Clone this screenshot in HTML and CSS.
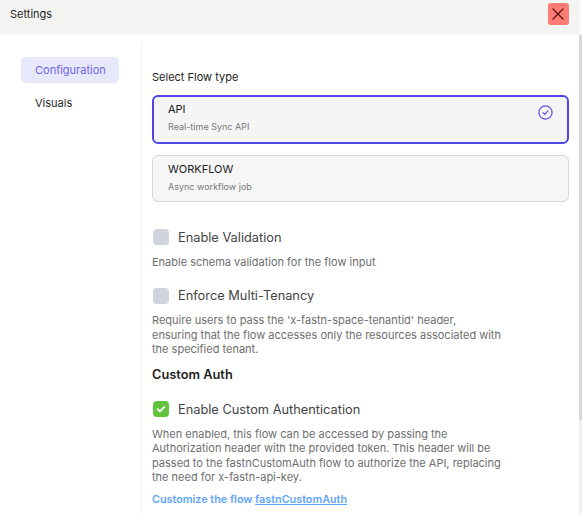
FILE: index.html
```html
<!DOCTYPE html>
<html lang="en">
<head>
<meta charset="utf-8">
<title>Settings</title>
<link rel="stylesheet" href="styles.css">
</head>
<body>
<div class="page">
  <div class="header">
    <div class="title">Settings</div>
    <button class="close" aria-label="Close">
      <svg width="12" height="12" viewBox="0 0 12 12"><path d="M1 1L11 11M11 1L1 11" stroke="#5a1414" stroke-width="1.3" fill="none" stroke-linecap="round"/></svg>
    </button>
  </div>
  <div class="main">
    <div class="sidebar">
      <div class="nav-item active">Configuration</div>
      <div class="nav-item">Visuals</div>
    </div>
    <div class="content">
      <div class="section-label">Select Flow type</div>
      <div class="card selected">
        <div class="card-text">
          <div class="card-title">API</div>
          <div class="card-sub">Real-time Sync API</div>
        </div>
        <svg class="card-check" width="15" height="15" viewBox="0 0 15 15"><circle cx="7.5" cy="7.5" r="6.6" fill="none" stroke="#5b50e6" stroke-width="1.2"/><path d="M5.1 7.8L6.8 9.4L10 5.9" fill="none" stroke="#5b50e6" stroke-width="1.2" stroke-linecap="round" stroke-linejoin="round"/></svg>
      </div>
      <div class="card">
        <div class="card-text">
          <div class="card-title">WORKFLOW</div>
          <div class="card-sub">Async workflow job</div>
        </div>
      </div>

      <div class="check-row first">
        <span class="box"></span>
        <span class="check-label">Enable Validation</span>
      </div>
      <div class="desc">Enable schema validation for the flow input</div>

      <div class="check-row">
        <span class="box"></span>
        <span class="check-label">Enforce Multi-Tenancy</span>
      </div>
      <div class="desc">Require users to pass the 'x-fastn-space-tenantid' header, ensuring that the flow accesses only the resources associated with the specified tenant.</div>

      <div class="heading">Custom Auth</div>

      <div class="check-row after-heading">
        <span class="box checked"><svg width="12" height="12" viewBox="0 0 12 12"><path d="M2.6 6.2L4.9 8.4L9.4 3.8" fill="none" stroke="#fff" stroke-width="1.8" stroke-linecap="round" stroke-linejoin="round"/></svg></span>
        <span class="check-label">Enable Custom Authentication</span>
      </div>
      <div class="desc">When enabled, this flow can be accessed by passing the Authorization header with the provided token. This header will be passed to the fastnCustomAuth flow to authorize the API, replacing the need for x-fastn-api-key.</div>
      <div class="link-line">Customize the flow <a class="link" href="#">fastnCustomAuth</a></div>
    </div>
  </div>
</div>
<div class="scrollbar">
  <div class="sb-top"></div>
  <div class="sb-thumb"></div>
  <div class="sb-track"></div>
</div>
</body>
</html>
```
FILE: styles.css
```css
html, body {
  margin: 0;
  padding: 0;
  height: 100%;
  overflow: hidden;
}
body {
  font-family: Inter, "Noto Sans", sans-serif;
  color: #222;
  background: #fff;
  display: flex;
}
.page {
  flex: 1;
  min-width: 0;
  display: flex;
  flex-direction: column;
}
.scrollbar {
  width: 3.5px;
  flex: none;
  display: flex;
  flex-direction: column;
}
.sb-top {
  height: 35px;
  background: #fafafa;
}
.sb-thumb {
  height: 385px;
  background: #d7d7d7;
}
.sb-track {
  flex: 1;
  background: #f0f0f0;
}
.header {
  height: 35px;
  flex: none;
  box-sizing: border-box;
  padding: 3px 10px 0 10px;
  background: #f4f4f2;
  display: flex;
  justify-content: space-between;
  align-items: flex-start;
}
.title {
  font-size: 11px;
  line-height: 22px;
  color: #1f1f1f;
}
.close {
  width: 21px;
  height: 22px;
  border: none;
  border-radius: 3px;
  background: #fd7c74;
  padding: 0;
  display: flex;
  align-items: center;
  justify-content: center;
}
.main {
  flex: 1;
  display: flex;
  overflow: hidden;
}
.sidebar {
  width: 142px;
  flex: none;
  box-sizing: border-box;
  margin-top: 8px;
  padding: 14px 22px 0 21px;
  border-right: 1px solid #efefef;
  display: flex;
  flex-direction: column;
  gap: 7px;
}
.nav-item {
  height: 26px;
  line-height: 26px;
  padding-left: 14px;
  font-size: 11px;
  color: #1f1f1f;
  border-radius: 5px;
}
.nav-item.active {
  background: #e8e8fb;
  color: #6b67e8;
}
.content {
  flex: 1;
  padding: 35px 10px 0 10px;
  min-width: 0;
}
.section-label {
  font-size: 11px;
  line-height: 14px;
  color: #222;
  margin-bottom: 11px;
}
.card {
  display: flex;
  justify-content: space-between;
  align-items: flex-start;
  border: 1px solid #d6d6dc;
  border-radius: 6px;
  background: #f6f6f6;
  padding: 6px 15px 7px 15px;
  margin-bottom: 11px;
}
.card.selected {
  border: 2px solid #4f46e5;
  padding: 5px 14px 8px 14px;
  background: #f5f5f5;
}
.card-title {
  font-size: 11px;
  line-height: 14px;
  color: #222;
}
.card-sub {
  font-size: 9px;
  line-height: 14px;
  color: #7a7a7a;
  margin-top: 4px;
}
.card-check {
  margin-top: 3px;
}
.check-row {
  display: flex;
  align-items: center;
  gap: 9px;
  height: 16px;
  margin-top: 18.5px;
  padding-left: 1px;
}
.check-row.first {
  margin-top: 27px;
}
.check-row.after-heading {
  margin-top: 18.5px;
}
.box {
  width: 16px;
  height: 16px;
  border-radius: 4px;
  background: #d1d4dc;
  display: flex;
  align-items: center;
  justify-content: center;
}
.box.checked {
  background: #64c33d;
}
.check-label {
  font-size: 12.8px;
  color: #444;
}
.desc {
  font-size: 11px;
  line-height: 14.5px;
  color: #6e6e6e;
  margin-top: 9.5px;
  max-width: 350px;
}
.heading {
  font-size: 12.8px;
  font-weight: 600;
  line-height: 16px;
  color: #1f1f1f;
  margin-top: 10px;
}
.link-line {
  font-size: 10.8px;
  line-height: 14.5px;
  font-weight: 600;
  color: #60a5fa;
  margin-top: 8px;
}
.link {
  color: #60a5fa;
  text-decoration: underline;
}
```
